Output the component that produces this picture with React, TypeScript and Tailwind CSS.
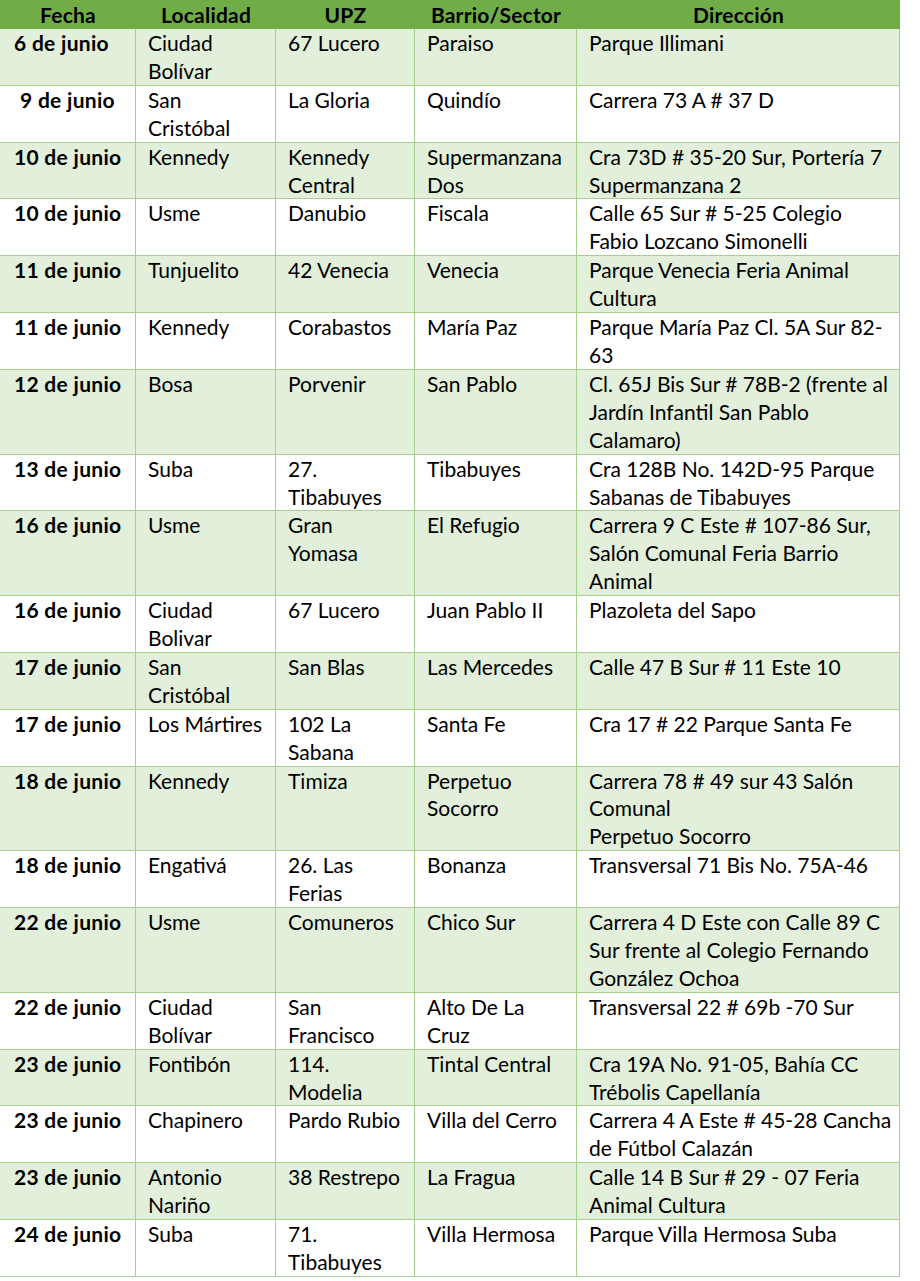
// Calendario de jornadas — tabla con filas alternas en verde

type Row = {
  fecha: string;
  localidad: string[];
  upz: string[];
  barrio: string[];
  direccion: string[];
  center?: boolean;
};

const rows: Row[] = [
  { fecha: "6 de junio", localidad: ["Ciudad", "Bolívar"], upz: ["67 Lucero"], barrio: ["Paraiso"], direccion: ["Parque Illimani"] },
  { fecha: "9 de junio", localidad: ["San", "Cristóbal"], upz: ["La Gloria"], barrio: ["Quindío"], direccion: ["Carrera 73 A # 37 D"], center: true },
  { fecha: "10 de junio", localidad: ["Kennedy"], upz: ["Kennedy", "Central"], barrio: ["Supermanzana", "Dos"], direccion: ["Cra 73D # 35-20 Sur, Portería 7", "Supermanzana 2"] },
  { fecha: "10 de junio", localidad: ["Usme"], upz: ["Danubio"], barrio: ["Fiscala"], direccion: ["Calle 65 Sur # 5-25 Colegio", "Fabio Lozcano Simonelli"] },
  { fecha: "11 de junio", localidad: ["Tunjuelito"], upz: ["42 Venecia"], barrio: ["Venecia"], direccion: ["Parque Venecia Feria Animal", "Cultura"] },
  { fecha: "11 de junio", localidad: ["Kennedy"], upz: ["Corabastos"], barrio: ["María Paz"], direccion: ["Parque María Paz Cl. 5A Sur 82-", "63"] },
  { fecha: "12 de junio", localidad: ["Bosa"], upz: ["Porvenir"], barrio: ["San Pablo"], direccion: ["Cl. 65J Bis Sur # 78B-2 (frente al", "Jardín Infantil San Pablo", "Calamaro)"] },
  { fecha: "13 de junio", localidad: ["Suba"], upz: ["27.", "Tibabuyes"], barrio: ["Tibabuyes"], direccion: ["Cra 128B No. 142D-95 Parque", "Sabanas de Tibabuyes"] },
  { fecha: "16 de junio", localidad: ["Usme"], upz: ["Gran", "Yomasa"], barrio: ["El Refugio"], direccion: ["Carrera 9 C Este # 107-86 Sur,", "Salón Comunal Feria Barrio", "Animal"] },
  { fecha: "16 de junio", localidad: ["Ciudad", "Bolivar"], upz: ["67 Lucero"], barrio: ["Juan Pablo II"], direccion: ["Plazoleta del Sapo"] },
  { fecha: "17 de junio", localidad: ["San", "Cristóbal"], upz: ["San Blas"], barrio: ["Las Mercedes"], direccion: ["Calle 47 B Sur # 11 Este 10"] },
  { fecha: "17 de junio", localidad: ["Los Mártires"], upz: ["102 La", "Sabana"], barrio: ["Santa Fe"], direccion: ["Cra 17 # 22 Parque Santa Fe"] },
  { fecha: "18 de junio", localidad: ["Kennedy"], upz: ["Timiza"], barrio: ["Perpetuo", "Socorro"], direccion: ["Carrera 78 # 49 sur 43 Salón", "Comunal", "Perpetuo Socorro"] },
  { fecha: "18 de junio", localidad: ["Engativá"], upz: ["26. Las", "Ferias"], barrio: ["Bonanza"], direccion: ["Transversal 71 Bis No. 75A-46"] },
  { fecha: "22 de junio", localidad: ["Usme"], upz: ["Comuneros"], barrio: ["Chico Sur"], direccion: ["Carrera 4 D Este con Calle 89 C", "Sur frente al Colegio Fernando", "González Ochoa"] },
  { fecha: "22 de junio", localidad: ["Ciudad", "Bolívar"], upz: ["San", "Francisco"], barrio: ["Alto De La", "Cruz"], direccion: ["Transversal 22 # 69b -70 Sur"] },
  { fecha: "23 de junio", localidad: ["Fontibón"], upz: ["114.", "Modelia"], barrio: ["Tintal Central"], direccion: ["Cra 19A No. 91-05, Bahía CC", "Trébolis Capellanía"] },
  { fecha: "23 de junio", localidad: ["Chapinero"], upz: ["Pardo Rubio"], barrio: ["Villa del Cerro"], direccion: ["Carrera 4 A Este # 45-28 Cancha", "de Fútbol Calazán"] },
  { fecha: "23 de junio", localidad: ["Antonio", "Nariño"], upz: ["38 Restrepo"], barrio: ["La Fragua"], direccion: ["Calle 14 B Sur # 29 - 07 Feria", "Animal Cultura"] },
  { fecha: "24 de junio", localidad: ["Suba"], upz: ["71.", "Tibabuyes"], barrio: ["Villa Hermosa"], direccion: ["Parque Villa Hermosa Suba"] },
];

const headers = ["Fecha", "Localidad", "UPZ", "Barrio/Sector", "Dirección"];

function Lines({ lines }: { lines: string[] }) {
  return (
    <>
      {lines.map((l, i) => (
        <div key={i} className="whitespace-nowrap">
          {l}
        </div>
      ))}
    </>
  );
}

export default function App() {
  return (
    <div className="w-[920px] min-h-[1281px] bg-white font-['Lato',sans-serif] text-[21px] text-black">
      <div className="grid w-[900px] grid-cols-[136px_140px_139px_162px_323px]">
        {/* ── Header ─────────────────────────── */}
        {headers.map((h) => (
          <div
            key={h}
            className="h-[29px] bg-[#70AD47] text-center font-bold leading-[29px] tracking-[0.2px]"
          >
            {h}
          </div>
        ))}

        {/* ── Rows ───────────────────────────── */}
        {rows.map((r, i) => {
          const bg = i % 2 === 0 ? "bg-[#E2EFDA]" : "bg-white";
          const base = `${bg} border-b border-r border-[#A9D08E] leading-[27.9px]`;
          const cell = `${base} pl-[12px] pr-[6px]`;
          return (
            <div key={i} className="contents">
              <div
                className={`${base} font-bold tracking-[0.3px] ${
                  r.center ? "text-center" : "pl-[14px]"
                }`}
              >
                {r.fecha}
              </div>
              <div className={cell}>
                <Lines lines={r.localidad} />
              </div>
              <div className={cell}>
                <Lines lines={r.upz} />
              </div>
              <div className={cell}>
                <Lines lines={r.barrio} />
              </div>
              <div className={cell}>
                <Lines lines={r.direccion} />
              </div>
            </div>
          );
        })}
      </div>
    </div>
  );
}
